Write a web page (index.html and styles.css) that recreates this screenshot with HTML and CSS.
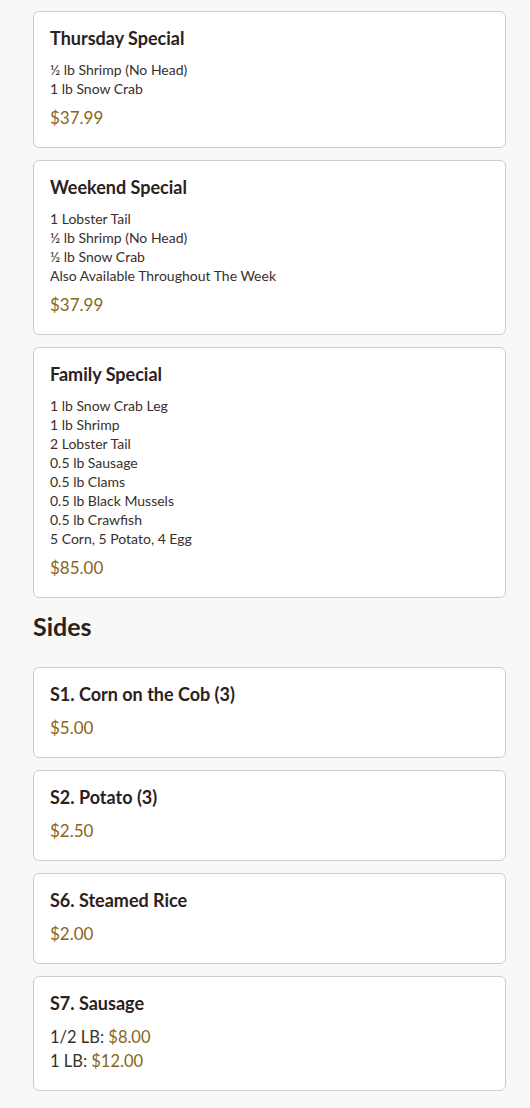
FILE: index.html
```html
<!DOCTYPE html>
<html>
<head>
    <meta charset="UTF-8">
    <meta name="viewport" content="width=device-width, initial-scale=1.0">
    <title>Menu - Specials &amp; Sides</title>
    <link rel="stylesheet" href="styles.css">
</head>
<body>
    <div class="menu">
        <div class="card">
            <h3 class="card-title">Thursday Special</h3>
            <div class="items">
                <div>½ lb Shrimp (No Head)</div>
                <div>1 lb Snow Crab</div>
            </div>
            <div class="price">$37.99</div>
        </div>

        <div class="card">
            <h3 class="card-title">Weekend Special</h3>
            <div class="items">
                <div>1 Lobster Tail</div>
                <div>½ lb Shrimp (No Head)</div>
                <div>½ lb Snow Crab</div>
                <div>Also Available Throughout The Week</div>
            </div>
            <div class="price">$37.99</div>
        </div>

        <div class="card">
            <h3 class="card-title">Family Special</h3>
            <div class="items">
                <div>1 lb Snow Crab Leg</div>
                <div>1 lb Shrimp</div>
                <div>2 Lobster Tail</div>
                <div>0.5 lb Sausage</div>
                <div>0.5 lb Clams</div>
                <div>0.5 lb Black Mussels</div>
                <div>0.5 lb Crawfish</div>
                <div>5 Corn, 5 Potato, 4 Egg</div>
            </div>
            <div class="price">$85.00</div>
        </div>

        <h2 class="section-title">Sides</h2>

        <div class="card">
            <h3 class="card-title">S1. Corn on the Cob (3)</h3>
            <div class="price">$5.00</div>
        </div>

        <div class="card">
            <h3 class="card-title">S2. Potato (3)</h3>
            <div class="price">$2.50</div>
        </div>

        <div class="card">
            <h3 class="card-title">S6. Steamed Rice</h3>
            <div class="price">$2.00</div>
        </div>

        <div class="card">
            <h3 class="card-title">S7. Sausage</h3>
            <div class="options">
                <div>1/2 LB: <span class="amount">$8.00</span></div>
                <div>1 LB: <span class="amount">$12.00</span></div>
            </div>
        </div>
    </div>
</body>
</html>
```

FILE: styles.css
```css
body {
    margin: 0;
    padding: 0;
    background: #f9f8f6;
    color: #3a2f2b;
    font-family: Lato, "Open Sans", sans-serif;
}

.menu {
    padding: 11px 24px 0 33px;
    display: flex;
    flex-direction: column;
    gap: 12px;
}

.card {
    background: #ffffff;
    border: 1px solid #cfcccb;
    border-radius: 6px;
    padding: 15px 16px 17px 16px;
}

.card-title {
    margin: 0;
    font-size: 18px;
    line-height: 22px;
    font-weight: bold;
    color: #2b211d;
}

.items {
    margin-top: 11px;
    font-size: 14px;
    line-height: 19px;
}

.price {
    margin-top: 8px;
    font-size: 17px;
    line-height: 24px;
    color: #8a6420;
}

.card-title + .price {
    margin-top: 11px;
}

.options {
    margin-top: 11px;
    font-size: 16.5px;
    line-height: 24px;
}

.amount {
    color: #8a6420;
}

.section-title {
    margin: 0 0 13px 0;
    font-size: 25px;
    line-height: 32px;
    font-weight: bold;
    color: #2b211d;
}
```
